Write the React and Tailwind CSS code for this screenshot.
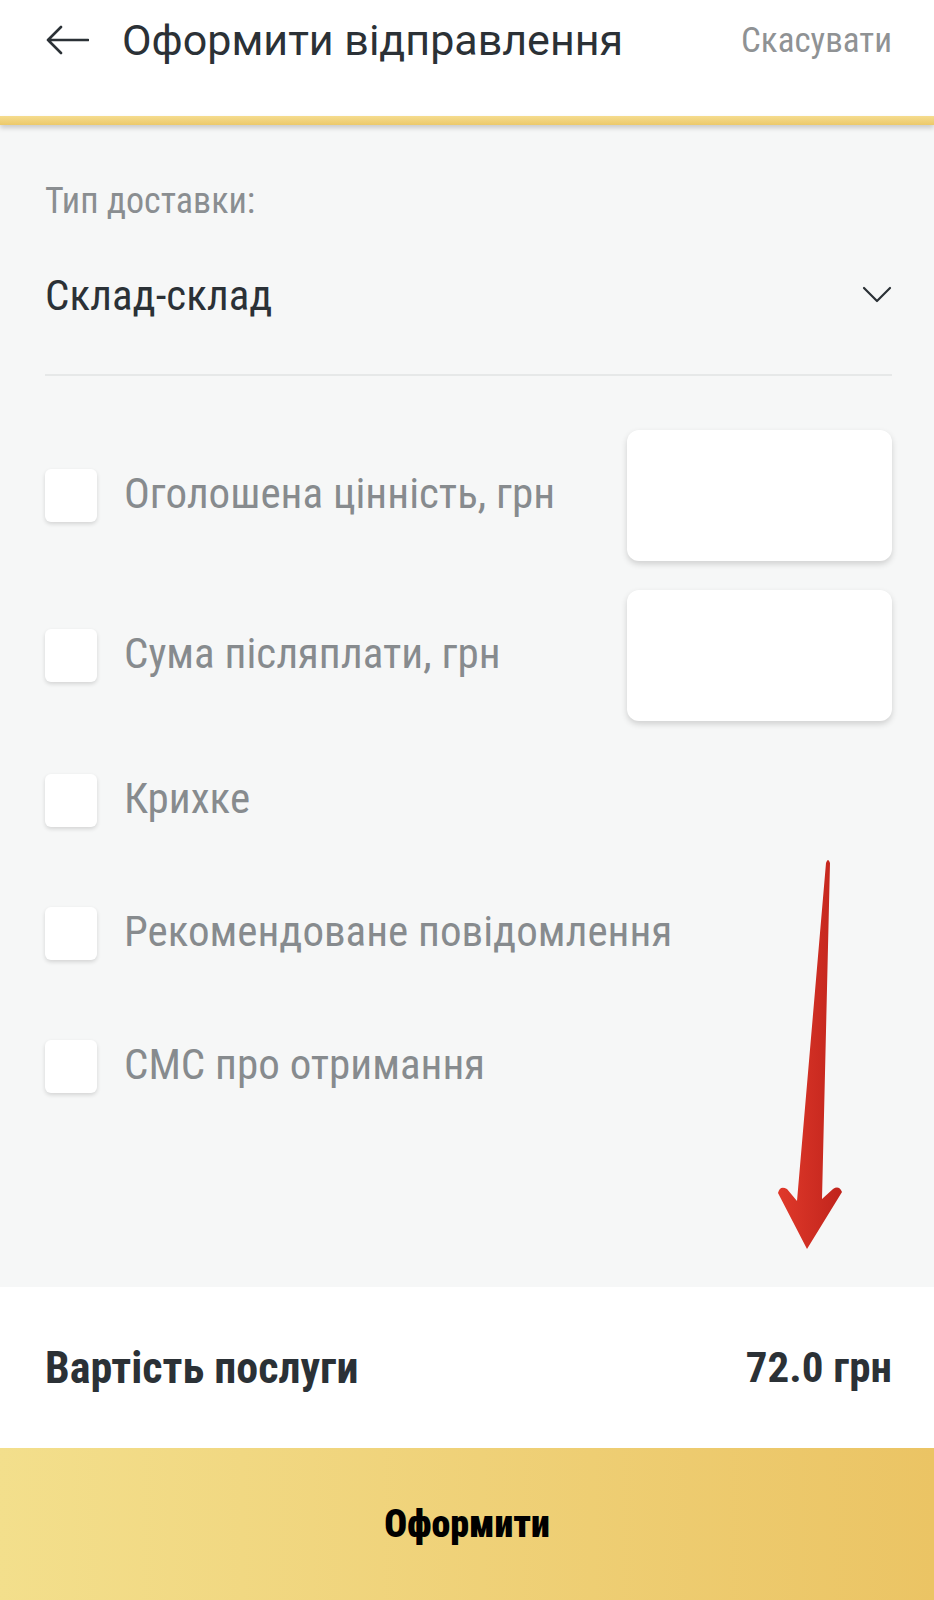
import React from "react";

function Checkbox() {
  return (
    <div className="w-[52px] h-[53px] shrink-0 rounded-[6px] bg-white shadow-[0_2px_4px_rgba(0,0,0,0.14)]" />
  );
}

function InputBox() {
  return (
    <div className="w-[265px] h-[131px] rounded-[12px] bg-white shadow-[0_3px_6px_rgba(0,0,0,0.16)]" />
  );
}

function Label({ children }) {
  return (
    <span className="ml-[27px] pb-[4px] [font-family:'Roboto_Condensed',Roboto,sans-serif] text-[43px] leading-none text-[#878b8e]">
      {children}
    </span>
  );
}

export default function App() {
  return (
    <div className="relative w-[934px] h-[1600px] flex flex-col bg-[#f6f7f7] overflow-hidden [font-family:Roboto,sans-serif]">
      {/* Header */}
      <div className="h-[116px] bg-white flex flex-col">
        <div className="h-[80px] flex items-center pl-[45px] pr-[42px]">
          <svg width="44" height="30" viewBox="0 0 44 30" className="shrink-0">
            <path
              d="M43 15 H3 M16 2 L3 15 L16 28"
              fill="none"
              stroke="#2b3136"
              strokeWidth="2.6"
              strokeLinecap="round"
              strokeLinejoin="round"
            />
          </svg>
          <div className="ml-[33px] text-[43px] text-[#2b3136] leading-none">
            Оформити відправлення
          </div>
          <div className="ml-auto [font-family:'Roboto_Condensed',Roboto,sans-serif] text-[35px] text-[#8f9294] leading-none">
            Скасувати
          </div>
        </div>
      </div>
      <div className="h-[9px] bg-gradient-to-b from-[#f5dc8e] to-[#ecc96a] shadow-[0_3px_5px_rgba(0,0,0,0.18)] z-10" />

      {/* Main */}
      <div className="flex-1 pl-[45px] pr-[42px] flex flex-col">
        <div className="mt-[58px] h-[36px] flex items-center [font-family:'Roboto_Condensed',Roboto,sans-serif] text-[36px] leading-none text-[#8a8e91]">
          Тип доставки:
        </div>
        <div className="mt-[56px] h-[40px] flex items-center justify-between">
          <span className="[font-family:'Roboto_Condensed',Roboto,sans-serif] text-[43px] leading-none text-[#2b3136]">
            Склад-склад
          </span>
          <svg width="30" height="18" viewBox="0 0 30 18">
            <path
              d="M2 2 L15 15 L28 2"
              fill="none"
              stroke="#2b3136"
              strokeWidth="2.2"
              strokeLinecap="round"
              strokeLinejoin="round"
            />
          </svg>
        </div>
        <div className="mt-[59px] h-[2px] bg-[#e6e8e8]" />

        <div className="mt-[54px] h-[131px] flex items-center">
          <Checkbox />
          <Label>Оголошена цінність, грн</Label>
          <div className="ml-auto">
            <InputBox />
          </div>
        </div>
        <div className="mt-[28px] h-[132px] flex items-center">
          <Checkbox />
          <Label>Сума післяплати, грн</Label>
          <div className="ml-auto">
            <InputBox />
          </div>
        </div>
        <div className="mt-[53px] h-[53px] flex items-center">
          <Checkbox />
          <Label>Крихке</Label>
        </div>
        <div className="mt-[80px] h-[53px] flex items-center">
          <Checkbox />
          <Label>Рекомендоване повідомлення</Label>
        </div>
        <div className="mt-[80px] h-[53px] flex items-center">
          <Checkbox />
          <Label>СМС про отримання</Label>
        </div>
      </div>

      {/* Footer */}
      <div className="h-[161px] bg-white pl-[45px] pr-[42px] flex items-center justify-between [font-family:'Roboto_Condensed',Roboto,sans-serif]">
        <span className="text-[44px] font-bold leading-none text-[#2b3136]">
          Вартість послуги
        </span>
        <span className="text-[43px] font-bold leading-none text-[#2b3136]">
          72.0 грн
        </span>
      </div>
      <div className="h-[152px] bg-gradient-to-r from-[#f3df8c] to-[#ebc464] flex items-center justify-center [font-family:'Roboto_Condensed',Roboto,sans-serif]">
        <span className="text-[38px] font-black leading-none text-black">
          Оформити
        </span>
      </div>

      {/* Annotation arrow */}
      <svg
        className="absolute left-[770px] top-[850px]"
        width="80"
        height="410"
        viewBox="770 850 80 410"
      >
        <defs>
          <linearGradient id="ar" x1="0" y1="0" x2="1" y2="0">
            <stop offset="0" stopColor="#e0392a" />
            <stop offset="1" stopColor="#c0241c" />
          </linearGradient>
        </defs>
        <path
          d="M826 863 Q828 857 830 863 L822 1199 L833 1189 Q839 1185 842 1192 L807 1249 L778 1193 Q780 1185 787 1189 L797 1201 Z"
          fill="url(#ar)"
        />
      </svg>
    </div>
  );
}
